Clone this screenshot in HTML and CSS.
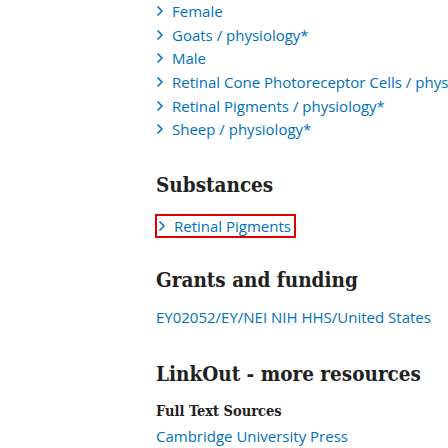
FILE: index.html
```html
<!DOCTYPE html>
<html>
<head>
<meta charset="utf-8">
<link rel="stylesheet" href="styles.css">
</head>
<body>
<div class="page">
  <ul class="terms">
    <li><a class="term"><svg class="chev" viewBox="0 0 8 12"><path d="M1.5 1.5 L6 6 L1.5 10.5" /></svg>Female</a></li>
    <li><a class="term"><svg class="chev" viewBox="0 0 8 12"><path d="M1.5 1.5 L6 6 L1.5 10.5" /></svg>Goats / physiology*</a></li>
    <li><a class="term"><svg class="chev" viewBox="0 0 8 12"><path d="M1.5 1.5 L6 6 L1.5 10.5" /></svg>Male</a></li>
    <li><a class="term"><svg class="chev" viewBox="0 0 8 12"><path d="M1.5 1.5 L6 6 L1.5 10.5" /></svg>Retinal Cone Photoreceptor Cells / physiology*</a></li>
    <li><a class="term"><svg class="chev" viewBox="0 0 8 12"><path d="M1.5 1.5 L6 6 L1.5 10.5" /></svg>Retinal Pigments / physiology*</a></li>
    <li><a class="term"><svg class="chev" viewBox="0 0 8 12"><path d="M1.5 1.5 L6 6 L1.5 10.5" /></svg>Sheep / physiology*</a></li>
  </ul>

  <h2 class="heading">Substances</h2>
  <div class="subst"><a class="term boxed"><svg class="chev" viewBox="0 0 8 12"><path d="M1.5 1.5 L6 6 L1.5 10.5" /></svg>Retinal Pigments</a></div>

  <h2 class="heading grants">Grants and funding</h2>
  <p class="grant">EY02052/EY/NEI NIH HHS/United States</p>

  <h2 class="heading linkout">LinkOut - more resources</h2>
  <h3 class="sub">Full Text Sources</h3>
  <p class="grant">Cambridge University Press</p>
</div>
</body>
</html>
```

FILE: styles.css
```css
html, body {
  margin: 0;
  padding: 0;
  background: #fff;
  overflow: hidden;
}
.page {
  padding-left: 156px;
  white-space: nowrap;
  font-family: "Open Sans", "Noto Sans", sans-serif;
  font-size: 15px;
  color: #0071bc;
}
.terms {
  list-style: none;
  margin: 0;
  padding: 0;
}
.terms li {
  height: 23.7px;
  line-height: 23.7px;
}
.term {
  display: inline-flex;
  align-items: center;
  color: #0071bc;
  line-height: 20px;
}
.chev {
  width: 8px;
  height: 12px;
  margin-right: 8px;
  fill: none;
  stroke: #0071bc;
  stroke-width: 1.5;
}
.heading {
  font-family: "DejaVu Serif", serif;
  font-stretch: condensed;
  font-weight: bold;
  font-size: 20.5px;
  color: #212121;
  margin: 30px 0 0;
  line-height: 26px;
}
.subst {
  margin-top: 16px;
  height: 23px;
}
.boxed {
  border: 2px solid #e00000;
  padding: 0 3px 0 1px;
  margin-left: -1px;
}
.grants { margin-top: 30px; }
.grant {
  margin: 14px 0 0;
  line-height: 20px;
}
.linkout { margin-top: 34px; }
.sub {
  font-family: "DejaVu Serif", serif;
  font-stretch: condensed;
  font-weight: bold;
  font-size: 14.5px;
  color: #212121;
  margin: 14px 0 0;
  line-height: 20px;
}
.sub + .grant { margin-top: 5px; }
```
